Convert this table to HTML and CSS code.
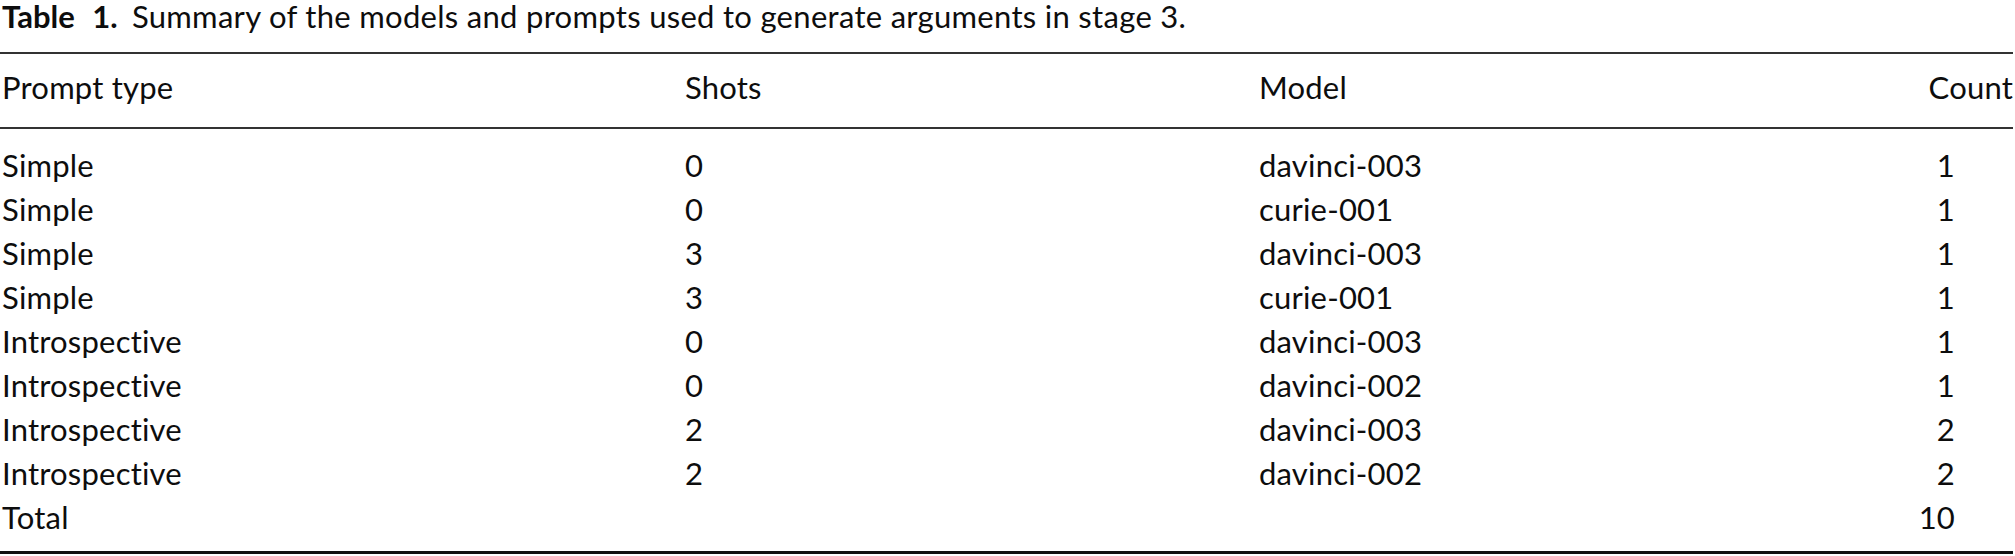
FILE: index.html
```html
<!DOCTYPE html>
<html lang="en">
<head>
<meta charset="utf-8">
<title>Table 1</title>
<link rel="stylesheet" href="styles.css">
</head>
<body>
<div class="table-wrap">
  <p class="caption"><span class="label"><span class="word">Table</span> <span class="num">1.</span></span> Summary of the models and prompts used to generate arguments in stage 3.</p>
  <div class="table">
    <div class="row head">
      <div class="c1">Prompt type</div>
      <div class="c2">Shots</div>
      <div class="c3">Model</div>
      <div class="c4">Count</div>
    </div>
    <div class="body">
      <div class="row"><div class="c1">Simple</div><div class="c2">0</div><div class="c3">davinci-003</div><div class="c4">1</div></div>
      <div class="row"><div class="c1">Simple</div><div class="c2">0</div><div class="c3">curie-001</div><div class="c4">1</div></div>
      <div class="row"><div class="c1">Simple</div><div class="c2">3</div><div class="c3">davinci-003</div><div class="c4">1</div></div>
      <div class="row"><div class="c1">Simple</div><div class="c2">3</div><div class="c3">curie-001</div><div class="c4">1</div></div>
      <div class="row"><div class="c1">Introspective</div><div class="c2">0</div><div class="c3">davinci-003</div><div class="c4">1</div></div>
      <div class="row"><div class="c1">Introspective</div><div class="c2">0</div><div class="c3">davinci-002</div><div class="c4">1</div></div>
      <div class="row"><div class="c1">Introspective</div><div class="c2">2</div><div class="c3">davinci-003</div><div class="c4">2</div></div>
      <div class="row"><div class="c1">Introspective</div><div class="c2">2</div><div class="c3">davinci-002</div><div class="c4">2</div></div>
      <div class="row"><div class="c1">Total</div><div class="c2"></div><div class="c3"></div><div class="c4">10</div></div>
    </div>
  </div>
</div>
</body>
</html>
```
FILE: styles.css
```css
html, body {
  margin: 0;
  padding: 0;
  background: #fff;
}
body {
  font-family: Lato, "Open Sans", sans-serif;
  color: #0d0d0d;
  width: 2015px;
  overflow: hidden;
}
.table-wrap {
  padding: 0 2px 0 0;
}
.caption {
  margin: 0;
  padding-left: 2px;
  font-size: 31px;
  line-height: 32px;
  letter-spacing: 0.3px;
  white-space: nowrap;
}
.caption .label {
  font-weight: 700;
  margin-right: 6px;
  letter-spacing: 0;
}
.caption .num {
  margin-left: 10px;
}
.table {
  margin-top: 20px;
  border-top: 2px solid #333;
  border-bottom: 3px solid #111;
}
.row {
  display: grid;
  grid-template-columns: 685px 574px 1fr 220px;
  font-size: 31px;
  line-height: 44px;
  height: 44px;
  letter-spacing: 0.2px;
}
.row .c1 { padding-left: 2px; }
.row .c4 { text-align: right; padding-right: 58px; }
.row.head .c4 { padding-right: 0; }
.head {
  padding: 11px 0 18px;
  border-bottom: 2px solid #333;
}
.body {
  padding: 14px 0 12px;
}
```
